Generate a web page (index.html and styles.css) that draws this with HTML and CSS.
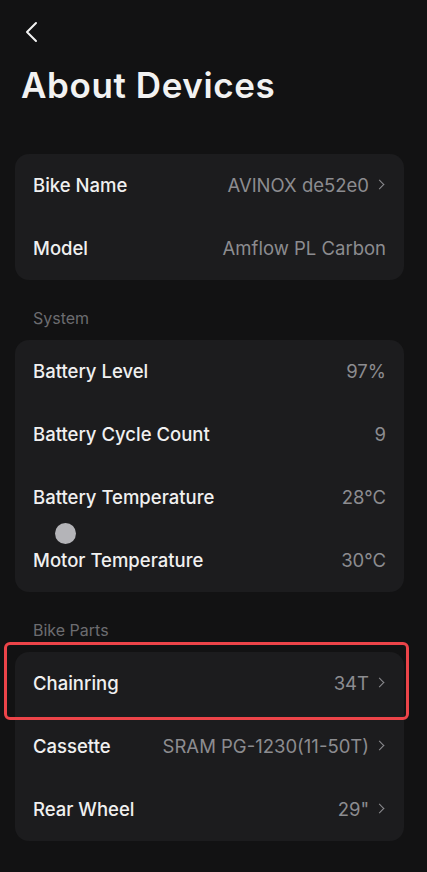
FILE: index.html
```html
<!DOCTYPE html>
<html lang="en">
<head>
    <meta charset="UTF-8">
    <meta name="viewport" content="width=device-width, initial-scale=1.0">
    <title>About Devices</title>
    <link rel="stylesheet" href="styles.css">
</head>
<body>
    <div class="header">
        <svg class="back" width="14" height="22" viewBox="0 0 14 22">
            <path d="M12 2 L3 11 L12 20" fill="none" stroke="#f2f2f2" stroke-width="2" stroke-linecap="round" stroke-linejoin="round"/>
        </svg>
        <h1>About Devices</h1>
    </div>

    <div class="card">
        <div class="row">
            <span class="label">Bike Name</span>
            <span class="value">AVINOX de52e0 <span class="chev"></span></span>
        </div>
        <div class="row">
            <span class="label">Model</span>
            <span class="value">Amflow PL Carbon</span>
        </div>
    </div>

    <div class="section">System</div>
    <div class="card">
        <div class="row">
            <span class="label">Battery Level</span>
            <span class="value">97%</span>
        </div>
        <div class="row">
            <span class="label">Battery Cycle Count</span>
            <span class="value">9</span>
        </div>
        <div class="row">
            <span class="label">Battery Temperature</span>
            <span class="value">28°C</span>
        </div>
        <div class="row">
            <span class="label">Motor Temperature</span>
            <span class="value">30°C</span>
        </div>
        <span class="touch"></span>
    </div>

    <div class="section">Bike Parts</div>
    <div class="card">
        <div class="row">
            <span class="label">Chainring</span>
            <span class="value">34T <span class="chev"></span></span>
        </div>
        <div class="row">
            <span class="label">Cassette</span>
            <span class="value">SRAM PG-1230(11-50T) <span class="chev"></span></span>
        </div>
        <div class="row">
            <span class="label">Rear Wheel</span>
            <span class="value">29" <span class="chev"></span></span>
        </div>
        <span class="highlight"></span>
    </div>
</body>
</html>
```

FILE: styles.css
```css
* {
    box-sizing: border-box;
    margin: 0;
    padding: 0;
}

body {
    background-color: #121213;
    font-family: Inter, "Noto Sans", sans-serif;
    color: #f2f2f2;
    width: 427px;
    min-height: 872px;
}

.header {
    padding: 21px 0 0 21px;
    height: 154px;
}

.back {
    display: block;
    margin-left: 3px;
}

.header h1 {
    font-size: 35px;
    font-weight: 600;
    margin-top: 21px;
    letter-spacing: 0.6px;
}

.card {
    position: relative;
    background-color: #1c1c1e;
    border-radius: 14px;
    margin: 0 23px 0 15px;
}

.row {
    height: 63px;
    display: flex;
    justify-content: space-between;
    align-items: center;
    padding: 0 18px 2px;
}

.label {
    font-size: 18.5px;
    font-weight: 500;
    color: #f0f0f0;
}

.value {
    font-size: 18.5px;
    color: #8c8c90;
    display: flex;
    align-items: center;
}

.chev {
    width: 7px;
    height: 7px;
    border-top: 1.5px solid #8c8c90;
    border-right: 1.5px solid #8c8c90;
    transform: rotate(45deg);
    margin-left: 7px;
    margin-right: 3px;
}

.section {
    font-size: 16px;
    color: #6c6c70;
    padding: 28px 0 0 33px;
    height: 60px;
}

.touch {
    position: absolute;
    left: 40px;
    top: 183px;
    width: 21px;
    height: 21px;
    border-radius: 50%;
    background-color: #b4b4b8;
}

.highlight {
    position: absolute;
    left: -11px;
    top: -10px;
    width: 405px;
    height: 78px;
    border: 3px solid #ec4449;
    border-radius: 6px;
}
```
